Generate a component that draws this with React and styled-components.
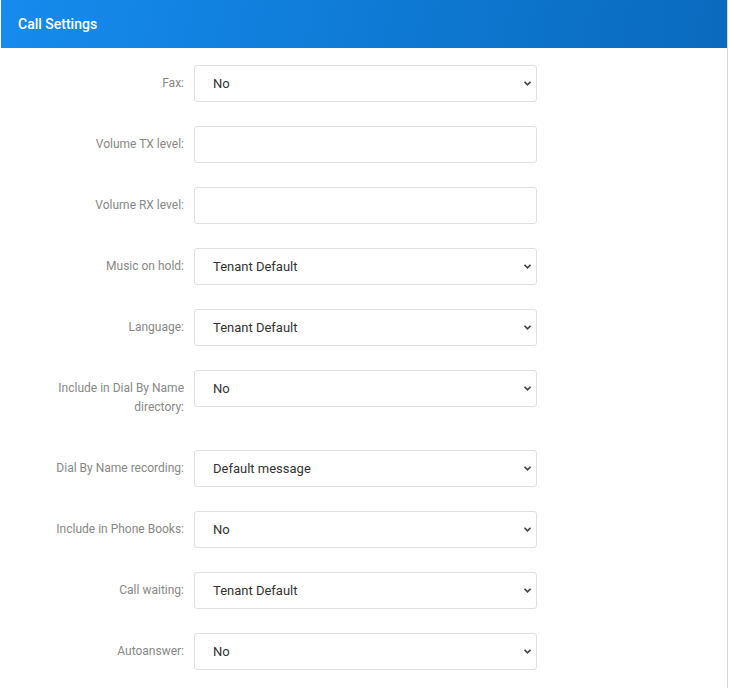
import styled, { createGlobalStyle } from "styled-components";

const GlobalStyle = createGlobalStyle`
  body {
    margin: 0;
    background: #ffffff;
    font-family: Roboto, "Liberation Sans", sans-serif;
  }
`;

const fields = [
  { label: "Fax:", type: "select", value: "No" },
  { label: "Volume TX level:", type: "input" },
  { label: "Volume RX level:", type: "input" },
  { label: "Music on hold:", type: "select", value: "Tenant Default" },
  { label: "Language:", type: "select", value: "Tenant Default" },
  { label: "Include in Dial By Name directory:", type: "select", value: "No" },
  { label: "Dial By Name recording:", type: "select", value: "Default message" },
  { label: "Include in Phone Books:", type: "select", value: "No" },
  { label: "Call waiting:", type: "select", value: "Tenant Default" },
  { label: "Autoanswer:", type: "select", value: "No" },
];

const App = () => {
  return (
    <>
      <GlobalStyle />
      <Panel>
        <Header>Call Settings</Header>
        <Body>
          {fields.map((f) => (
            <Row key={f.label}>
              <Label>{f.label}</Label>
              {f.type === "select" ? (
                <SelectWrap>
                  <Select defaultValue={f.value}>
                    <option>{f.value}</option>
                  </Select>
                  <Chevron viewBox="0 0 10 8">
                    <path d="M1.5 2 L5 5.5 L8.5 2" fill="none" stroke="#444" strokeWidth="2" />
                  </Chevron>
                </SelectWrap>
              ) : (
                <Input />
              )}
            </Row>
          ))}
        </Body>
      </Panel>
    </>
  );
};

export default App;

const Panel = styled.div`
  width: 727px;
  margin-left: 1px;
  border-right: 1px solid #d6d6d6;
  height: 688px;
  box-sizing: border-box;
`;

const Header = styled.div`
  height: 48px;
  display: flex;
  align-items: center;
  padding-left: 17px;
  color: #fff;
  font-size: 14px;
  font-weight: 500;
  background: linear-gradient(100deg, #168bee 0%, #0e79d3 55%, #0a6abd 100%);
`;

const Body = styled.div`
  padding-top: 17px;
`;

const Row = styled.div`
  display: flex;
  align-items: flex-start;
  gap: 10px;
  margin-bottom: 24px;
`;

const Label = styled.div`
  width: 183px;
  flex-shrink: 0;
  box-sizing: border-box;
  padding: 9px 0 9px 40px;
  text-align: right;
  font-size: 12px;
  line-height: 19px;
  color: #888;
`;

const SelectWrap = styled.div`
  position: relative;
  width: 343px;
`;

const Select = styled.select`
  width: 100%;
  height: 37px;
  appearance: none;
  border: 1px solid #e0e0e0;
  border-radius: 3px;
  background: #fff;
  padding: 0 18px;
  font-family: Roboto, "Liberation Sans", sans-serif;
  font-size: 13px;
  color: #333;
`;

const Chevron = styled.svg`
  position: absolute;
  right: 5px;
  top: 15px;
  width: 9px;
  height: 7px;
  pointer-events: none;
`;

const Input = styled.input`
  width: 343px;
  height: 37px;
  box-sizing: border-box;
  border: 1px solid #e0e0e0;
  border-radius: 3px;
`;
